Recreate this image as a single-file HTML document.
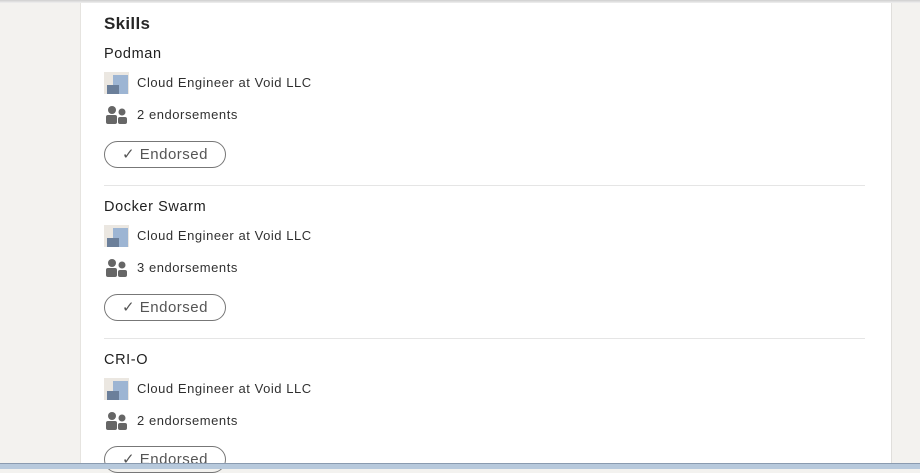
<!DOCTYPE html>
<html><head><meta charset="utf-8"><style>
body{margin:0;width:920px;height:468px;background:#f3f2ef;position:relative;overflow:hidden;font-family:"Liberation Sans",sans-serif;color:#000}
.card{position:absolute;left:80px;top:0;width:810px;height:468px;background:#fff;border-left:1px solid #e6e4e0;border-right:1px solid #e0dfdc}
.topsh{position:absolute;left:0;top:0;width:920px;height:3px;background:linear-gradient(#cfcfcf,#f0f0f0)}
.t{position:absolute;left:104px;font-size:17px;font-weight:bold;color:rgba(0,0,0,.85);letter-spacing:0.3px}
.sk{position:absolute;left:104px;font-size:14.5px;letter-spacing:0.6px;color:rgba(0,0,0,.88)}
.row{position:absolute;left:137px;font-size:13px;letter-spacing:0.55px;color:rgba(0,0,0,.82)}
.co{position:absolute;left:104px;width:25px;height:22px;background:#ebe7e1}
.co:before{content:"";position:absolute;left:9px;top:3px;width:15px;height:19px;background:#9db5d3}
.co:after{content:"";position:absolute;left:3px;top:13px;width:12px;height:9px;background:#6b7f9a}
.pp{position:absolute;left:106px;width:21px;height:18px}
.btn{position:absolute;left:104px;width:120px;height:25px;border:1px solid #777;border-radius:14px;font-size:15px;letter-spacing:0.5px;color:#555;text-align:center;line-height:25px}
.hr{position:absolute;left:104px;width:761px;height:1px;background:#e5e5e5}
.tb{position:absolute;left:0;top:463px;width:920px;height:5px;background:#b7c9dc;border-top:1px solid #8a9bb0}
</style></head><body>
<div class="card"></div>
<div class="topsh"></div>
<div class="t" style="top:14px">Skills</div>

<div class="sk" style="top:46px">Podman</div>
<div class="co" style="top:72px"></div>
<div class="row" style="top:75px">Cloud Engineer at Void LLC</div>
<svg class="pp" style="top:106px" viewBox="0 0 21 18"><circle cx="6" cy="4" r="4" fill="#666"/><rect x="0" y="9" width="11" height="9" rx="2" fill="#666"/><circle cx="16" cy="6" r="3.5" fill="#666"/><rect x="12" y="11" width="9" height="7" rx="2" fill="#666"/></svg>
<div class="row" style="top:107px">2 endorsements</div>
<div class="btn" style="top:141px">✓ Endorsed</div>
<div class="hr" style="top:185px"></div>

<div class="sk" style="top:199px">Docker Swarm</div>
<div class="co" style="top:225px"></div>
<div class="row" style="top:228px">Cloud Engineer at Void LLC</div>
<svg class="pp" style="top:259px" viewBox="0 0 21 18"><circle cx="6" cy="4" r="4" fill="#666"/><rect x="0" y="9" width="11" height="9" rx="2" fill="#666"/><circle cx="16" cy="6" r="3.5" fill="#666"/><rect x="12" y="11" width="9" height="7" rx="2" fill="#666"/></svg>
<div class="row" style="top:260px">3 endorsements</div>
<div class="btn" style="top:294px">✓ Endorsed</div>
<div class="hr" style="top:338px"></div>

<div class="sk" style="top:352px">CRI-O</div>
<div class="co" style="top:378px"></div>
<div class="row" style="top:381px">Cloud Engineer at Void LLC</div>
<svg class="pp" style="top:412px" viewBox="0 0 21 18"><circle cx="6" cy="4" r="4" fill="#666"/><rect x="0" y="9" width="11" height="9" rx="2" fill="#666"/><circle cx="16" cy="6" r="3.5" fill="#666"/><rect x="12" y="11" width="9" height="7" rx="2" fill="#666"/></svg>
<div class="row" style="top:413px">2 endorsements</div>
<div class="btn" style="top:446px">✓ Endorsed</div>

<div class="tb"></div>
</body></html>
